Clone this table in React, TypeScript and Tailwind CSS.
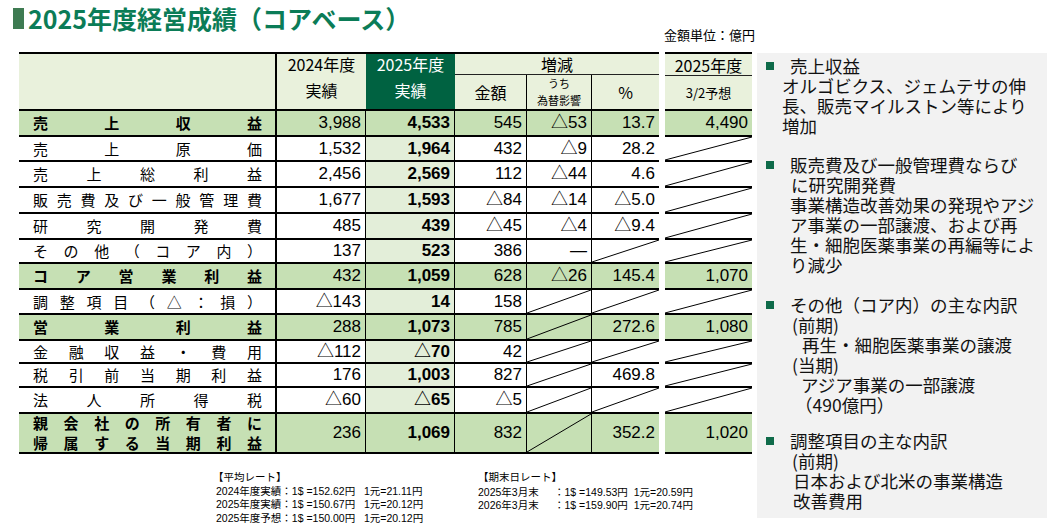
import React from 'react';

type Row = {
  label: string[];
  hl?: boolean;
  h: string;
  v: string[];
};

// '/' marks a cell crossed out with a diagonal
const rows: Row[] = [
  { label: ['売上収益'], hl: true, h: 'h-[26px]', v: ['3,988', '4,533', '545', '△53', '13.7', '4,490'] },
  { label: ['売上原価'], h: 'h-[25px]', v: ['1,532', '1,964', '432', '△9', '28.2', '/'] },
  { label: ['売上総利益'], h: 'h-[26px]', v: ['2,456', '2,569', '112', '△44', '4.6', '/'] },
  { label: ['販売費及び一般管理費'], h: 'h-[26px]', v: ['1,677', '1,593', '△84', '△14', '△5.0', '/'] },
  { label: ['研究開発費'], h: 'h-[26px]', v: ['485', '439', '△45', '△4', '△9.4', '/'] },
  { label: ['その他（コア内）'], h: 'h-[24px]', v: ['137', '523', '386', '—', '/', '/'] },
  { label: ['コア営業利益'], hl: true, h: 'h-[26px]', v: ['432', '1,059', '628', '△26', '145.4', '1,070'] },
  { label: ['調整項目（△：損）'], h: 'h-[25px]', v: ['△143', '14', '158', '/', '/', '/'] },
  { label: ['営業利益'], hl: true, h: 'h-[26px]', v: ['288', '1,073', '785', '/', '272.6', '1,080'] },
  { label: ['金融収益・費用'], h: 'h-[23px]', v: ['△112', '△70', '42', '/', '/', '/'] },
  { label: ['税引前当期利益'], h: 'h-[24px]', v: ['176', '1,003', '827', '/', '469.8', '/'] },
  { label: ['法人所得税'], h: 'h-[26px]', v: ['△60', '△65', '△5', '/', '/', '/'] },
  { label: ['親会社の所有者に', '帰属する当期利益'], hl: true, h: 'h-[40px]', v: ['236', '1,069', '832', '/', '352.2', '1,020'] },
];

function Diag() {
  return (
    <svg className="absolute inset-0 w-full h-full" viewBox="0 0 100 100" preserveAspectRatio="none">
      <line x1="0" y1="100" x2="100" y2="0" stroke="#000" strokeWidth="1" vectorEffect="non-scaling-stroke" />
    </svg>
  );
}

function Cell({ value, className, bold }: { value: string; className: string; bold?: boolean }) {
  return (
    <div className={`relative shrink-0 border-b-2 border-black flex items-center justify-end pr-[4px] ${className}`}>
      {value === '/' ? <Diag /> : <span className={bold ? 'font-bold' : ''}>{value}</span>}
    </div>
  );
}

function BodyRow({ r }: { r: Row }) {
  const bg = r.hl ? 'bg-[#c6e0b4]' : 'bg-white';
  const bg25 = r.hl ? 'bg-[#c6e0b4]' : 'bg-[#e3eed9]';
  return (
    <div className={`flex ${r.h} text-[17px] font-['Liberation_Sans','Noto_Sans_CJK_JP',sans-serif] text-black`}>
      <div
        className={`w-[258px] shrink-0 border-b-2 border-r-2 border-black ${bg} pl-[14px] pr-[13px] flex flex-col justify-center font-['Noto_Sans_CJK_JP',sans-serif] text-[15px] leading-[20px] ${r.hl ? 'font-bold' : ''}`}
      >
        {r.label.map((line) => (
          <div key={line} className="flex justify-between">
            {Array.from(line).map((ch, i) => (
              <span key={i}>{ch}</span>
            ))}
          </div>
        ))}
      </div>
      <Cell value={r.v[0]} className={`w-[89px] border-r ${bg}`} />
      <Cell value={r.v[1]} className={`w-[89px] border-r ${bg25}`} bold />
      <Cell value={r.v[2]} className={`w-[72px] border-r ${bg}`} />
      <Cell value={r.v[3]} className={`w-[65px] border-r ${bg}`} />
      <Cell value={r.v[4]} className={`w-[67px] ${bg}`} />
      <div className="w-[6px] shrink-0" />
      <Cell value={r.v[5]} className={`w-[87px] ${bg}`} />
    </div>
  );
}

function Head({ children }: { children: React.ReactNode }) {
  return (
    <div className="flex items-center">
      <span className="ml-[9px] w-[8px] h-[8px] bg-[#0f6b4a] shrink-0" />
      <span className="ml-[16px]">{children}</span>
    </div>
  );
}

export default function App() {
  return (
    <div className="w-[1047px] h-[528px] bg-white overflow-hidden text-black font-['Noto_Sans_CJK_JP',sans-serif]">
      {/* Title */}
      <div className="h-[28px] flex items-start pt-[8px] pl-[13px]">
        <span className="w-[11px] h-[21px] bg-[#3e7b52] shrink-0" />
        <span className="ml-[4px] text-[25px] leading-[21px] font-bold text-[#0b7c57] whitespace-nowrap">
          2025年度経営成績（コアベース）
        </span>
      </div>

      <div className="flex">
        {/* Left: table + rates */}
        <div className="w-[757px] shrink-0 pl-[19px]">
          <div className="h-[24px] text-right pr-[2px] text-[13px] leading-[14px]">金額単位：億円</div>

          {/* Header */}
          <div className="flex h-[59px] text-[16px]">
            <div className="w-[258px] shrink-0 border-t-2 border-b-2 border-r-2 border-black bg-[#e9f1dc]" />
            <div className="w-[89px] shrink-0 border-t-2 border-b-2 border-black bg-[#e9f1dc] flex flex-col items-center leading-[20px]">
              <span>2024年度</span>
              <span className="mt-[6px]">実績</span>
            </div>
            <div className="w-[89px] shrink-0 border-t-2 border-b-2 border-black bg-[#006241] text-white flex flex-col items-center leading-[20px]">
              <span>2025年度</span>
              <span className="mt-[6px]">実績</span>
            </div>
            <div className="w-[204px] shrink-0 border-t-2 border-b-2 border-black bg-[#e9f1dc] flex flex-col">
              <div className="h-[22px] border-b border-[#222] flex items-center justify-center leading-[20px]">増減</div>
              <div className="flex flex-1">
                <div className="w-[72px] shrink-0 border-r border-black flex items-center justify-center">金額</div>
                <div className="w-[65px] shrink-0 border-r border-black flex flex-col items-center justify-center text-[11px] leading-[17px]">
                  <span>うち</span>
                  <span>為替影響</span>
                </div>
                <div className="flex-1 flex items-center justify-center">%</div>
              </div>
            </div>
            <div className="w-[6px] shrink-0" />
            <div className="w-[87px] shrink-0 border-t-2 border-b-2 border-black bg-[#e9f1dc] flex flex-col">
              <div className="h-[22px] border-b border-[#222] flex items-center justify-center leading-[20px]">2025年度</div>
              <div className="flex-1 flex items-center justify-center text-[13px]">3/2予想</div>
            </div>
          </div>

          {/* Body */}
          {rows.map((r) => (
            <BodyRow key={r.label.join('')} r={r} />
          ))}

          {/* Exchange rates */}
          <div className="flex mt-[17px] text-[10.5px] leading-[13.5px] font-['Liberation_Sans','Noto_Sans_CJK_JP',sans-serif] whitespace-pre">
            <div className="ml-[197px] w-[262px] shrink-0">
              <div className="-ml-[3px]">【平均レート】</div>
              <div>2024年度実績：1$ =152.62円   1元=21.11円</div>
              <div>2025年度実績：1$ =150.67円   1元=20.12円</div>
              <div>2025年度予想：1$ =150.00円   1元=20.12円</div>
            </div>
            <div>
              <div>【期末日レート】</div>
              <div className="mt-[1px] flex">
                <span className="w-[76px]">2025年3月末</span>
                <span>：1$ =149.53円  1元=20.59円</span>
              </div>
              <div className="flex">
                <span className="w-[76px]">2026年3月末</span>
                <span>：1$ =159.90円  1元=20.74円</span>
              </div>
            </div>
          </div>
        </div>

        {/* Right: commentary */}
        <div className="mt-[25px] w-[290px] h-[465px] bg-[#f2f2f2] text-[17.5px] leading-[20px] text-[#111] whitespace-nowrap">
          <div className="pt-[3px]">
            <Head>売上収益</Head>
            <div className="pl-[25px]">オルゴビクス、ジェムテサの伸</div>
            <div className="pl-[25px]">長、販売マイルストン等により</div>
            <div className="pl-[25px]">増加</div>
          </div>
          <div className="mt-[19px]">
            <Head>販売費及び一般管理費ならび</Head>
            <div className="pl-[34px]">に研究開発費</div>
            <div className="pl-[33px]">事業構造改善効果の発現やアジ</div>
            <div className="pl-[33px]">ア事業の一部譲渡、および再</div>
            <div className="pl-[33px]">生・細胞医薬事業の再編等によ</div>
            <div className="pl-[33px]">り減少</div>
          </div>
          <div className="mt-[20px]">
            <Head>その他（コア内）の主な内訳</Head>
            <div className="pl-[35px]">(前期)</div>
            <div className="pl-[45px]">再生・細胞医薬事業の譲渡</div>
            <div className="pl-[35px]">(当期)</div>
            <div className="pl-[44px]">アジア事業の一部譲渡</div>
            <div className="pl-[38px]">（490億円）</div>
          </div>
          <div className="mt-[16px]">
            <Head>調整項目の主な内訳</Head>
            <div className="pl-[35px]">(前期)</div>
            <div className="pl-[36px]">日本および北米の事業構造</div>
            <div className="pl-[36px]">改善費用</div>
          </div>
        </div>
      </div>
    </div>
  );
}
